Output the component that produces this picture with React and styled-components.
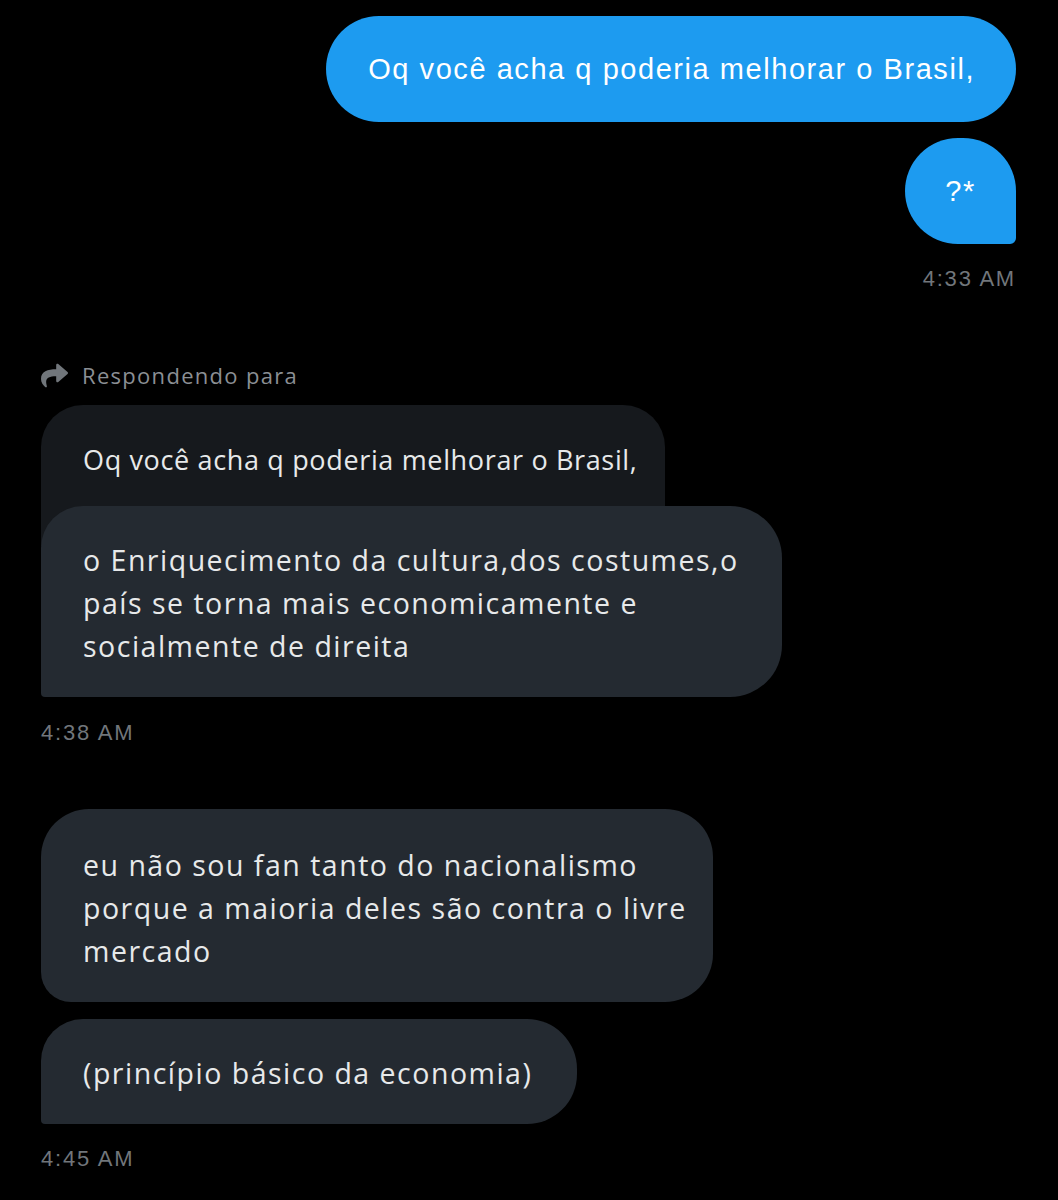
import React from "react";
import styled, { createGlobalStyle } from "styled-components";
import { FaShare } from "react-icons/fa";

const Global = createGlobalStyle`
  html, body { margin: 0; padding: 0; background: #000; }
  body { width: 1058px; min-height: 1200px; }
`;

const Page = styled.div`
  width: 1058px;
  min-height: 1200px;
  box-sizing: border-box;
  background: #000;
  padding: 16px 42px 40px 41px;
  display: flex;
  flex-direction: column;
`;

const Group = styled.div`
  display: flex;
  flex-direction: column;
  align-items: ${(p) => (p.$out ? "flex-end" : "flex-start")};
  gap: ${(p) => p.$gap ?? 16}px;
  margin-top: ${(p) => p.$mt ?? 0}px;
`;

const OutBubble = styled.div`
  background: #1d9bf0;
  color: #ffffff;
  font-family: "Liberation Sans", Arial, sans-serif;
  font-size: 29px;
  letter-spacing: 1.55px;
  line-height: 43px;
  padding: 32px ${(p) => (p.$tail ? 0 : 41)}px 31px ${(p) => (p.$tail ? 0 : 42)}px;
  min-width: ${(p) => p.$min ?? 0}px;
  box-sizing: border-box;
  text-align: center;
  border-radius: ${(p) => (p.$tail ? "53px 53px 6px 53px" : "53px")};
`;

const Time = styled.div`
  font-family: "Liberation Sans", Arial, sans-serif;
  font-size: 22px;
  letter-spacing: 1.8px;
  line-height: 26px;
  color: #71767b;
  margin-top: ${(p) => p.$mt ?? 0}px;
`;

const ReplyHead = styled.div`
  display: flex;
  align-items: center;
  gap: 14px;
  height: 28px;
  color: #8b8f94;
  font-family: "Open Sans", "Noto Sans", sans-serif;
  font-size: 22px;
  letter-spacing: 1.3px;
  margin-top: 69px;
  svg { color: #71767b; flex: none; }
`;

const Thread = styled.div`
  display: flex;
  flex-direction: column;
  align-items: flex-start;
  margin-top: 16px;
`;

const Quote = styled.div`
  background: #16191d;
  color: #e7e9ea;
  font-family: "Open Sans", "Noto Sans", sans-serif;
  font-size: 27px;
  letter-spacing: 0.65px;
  line-height: 43px;
  padding: 33px 28px 65px 42px;
  border-radius: 42px 42px 0 0;
`;

const InBubble = styled.div`
  position: relative;
  background: #242a31;
  color: #e7e9ea;
  font-family: "Open Sans", "Noto Sans", sans-serif;
  font-size: 28.5px;
  letter-spacing: 1.5px;
  line-height: 43px;
  padding: ${(p) => p.$pt ?? 33}px ${(p) => p.$pr ?? 42}px 29px 42px;
  margin-top: ${(p) => p.$mt ?? 0}px;
  white-space: nowrap;
  border-radius: ${(p) => p.$radius};
`;

export default function App() {
  return (
    <>
      <Global />
      <Page>
        <Group $out>
          <OutBubble>Oq você acha q poderia melhorar o Brasil,</OutBubble>
          <OutBubble $tail $min={111}>?*</OutBubble>
        </Group>
        <Group $out $gap={0}>
          <Time $mt={22}>4:33 AM</Time>
        </Group>

        <ReplyHead>
          <FaShare size={27} />
          <span>Respondendo para</span>
        </ReplyHead>

        <Thread>
          <Quote>Oq você acha q poderia melhorar o Brasil,</Quote>
          <InBubble $mt={-40} $pr={43} $radius="42px 52px 52px 4px">
            o Enriquecimento da cultura,dos costumes,o
            <br />
            país se torna mais economicamente e
            <br />
            socialmente de direita
          </InBubble>
          <Time $mt={23}>4:38 AM</Time>
        </Thread>

        <Group $mt={63} $gap={17}>
          <InBubble $pt={35} $pr={26} $radius="48px 48px 48px 30px">
            eu não sou fan tanto do nacionalismo
            <br />
            porque a maioria deles são contra o livre
            <br />
            mercado
          </InBubble>
          <InBubble $pr={45} $radius="42px 50px 50px 4px">(princípio básico da economia)</InBubble>
        </Group>
        <Time $mt={22}>4:45 AM</Time>
      </Page>
    </>
  );
}
